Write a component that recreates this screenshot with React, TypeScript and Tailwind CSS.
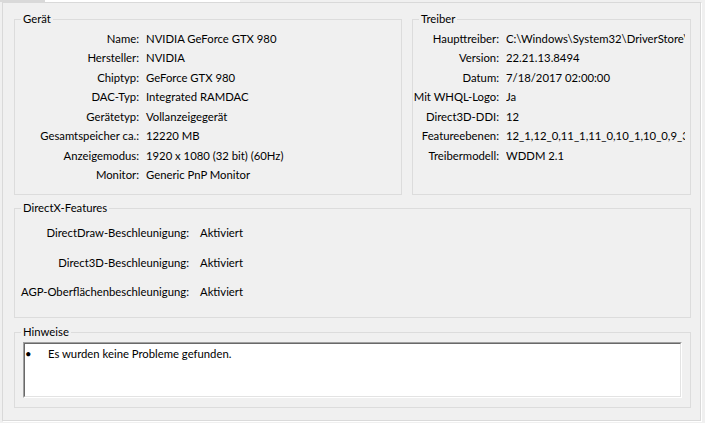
import type { ReactNode } from 'react';

const DEVICE_ROWS = [
  ['Name', 'NVIDIA GeForce GTX 980'],
  ['Hersteller', 'NVIDIA'],
  ['Chiptyp', 'GeForce GTX 980'],
  ['DAC-Typ', 'Integrated RAMDAC'],
  ['Gerätetyp', 'Vollanzeigegerät'],
  ['Gesamtspeicher ca.', '12220 MB'],
  ['Anzeigemodus', '1920 x 1080 (32 bit) (60Hz)'],
  ['Monitor', 'Generic PnP Monitor'],
];

const DRIVER_ROWS = [
  ['Haupttreiber', 'C:\\Windows\\System32\\DriverStore\\FileRepository\\nv_dispi.inf_amd64\\nvldumdx.dll'],
  ['Version', '22.21.13.8494'],
  ['Datum', '7/18/2017 02:00:00'],
  ['Mit WHQL-Logo', 'Ja'],
  ['Direct3D-DDI', '12'],
  ['Featureebenen', '12_1,12_0,11_1,11_0,10_1,10_0,9_3,9_2,9_1'],
  ['Treibermodell', 'WDDM 2.1'],
];

const FEATURES = [
  ['DirectDraw-Beschleunigung', 'Aktiviert'],
  ['Direct3D-Beschleunigung', 'Aktiviert'],
  ['AGP-Oberflächenbeschleunigung', 'Aktiviert'],
];

function GroupBox({ title, className, children }: { title: string; className: string; children?: ReactNode }) {
  return (
    <fieldset className={`min-w-0 shrink-0 border border-[#dcdcdc] ${className}`}>
      <legend className="ml-[6px] px-[2px] leading-[14px]">{title}</legend>
      {children}
    </fieldset>
  );
}

export default function App() {
  return (
    <div className="w-[705px] h-[423px] bg-[#f0f0f0] text-[11.3px] text-black font-['Lato',sans-serif] overflow-hidden">
      {/* tab strip edge */}
      <div className="flex h-[2px]">
        <div className="w-[45px] bg-[#d9d9d9]" />
        <div className="w-[195px] bg-white" />
      </div>

      {/* tab page */}
      <div className="ml-[2px] w-[700px] h-[420px] border border-[#d9d9d9] border-r-white border-b-white">
        <div className="w-[698px] h-[418px] border-r border-b border-[#dadada] pl-[11px] pt-[9px]">
          <div className="flex gap-[10px]">
            <GroupBox title="Gerät" className="w-[388px] h-[183px]">
              <div className="flex flex-col pt-[2.5px]">
                {DEVICE_ROWS.map(([label, value]) => (
                  <div key={label} className="flex h-[19.5px] leading-[19.5px] whitespace-nowrap">
                    <span className="w-[124px] text-right">{label}:</span>
                    <span className="ml-[7px]">{value}</span>
                  </div>
                ))}
              </div>
            </GroupBox>

            <GroupBox title="Treiber" className="w-[279px] h-[183px] pr-[5px]">
              <div className="flex flex-col pt-[2.5px]">
                {DRIVER_ROWS.map(([label, value]) => (
                  <div key={label} className="flex h-[19.5px] leading-[19.5px] whitespace-nowrap">
                    <span className="w-[86px] shrink-0 text-right">{label}:</span>
                    <span className="ml-[7px] min-w-0 flex-1 overflow-hidden">{value}</span>
                  </div>
                ))}
              </div>
            </GroupBox>
          </div>

          <GroupBox title="DirectX-Features" className="mt-[6px] w-[677px] h-[117px]">
            <div className="flex flex-col gap-[9.5px] pt-[8px]">
              {FEATURES.map(([label, value]) => (
                <div key={label} className="flex h-[20px] leading-[20px] whitespace-nowrap">
                  <span className="w-[174px] text-right">{label}:</span>
                  <span className="ml-[11px]">{value}</span>
                </div>
              ))}
            </div>
          </GroupBox>

          <GroupBox title="Hinweise" className="mt-[7px] w-[677px] h-[83px]">
            <div className="ml-[8px] mt-[3px] w-[659px] h-[56px] border border-[#a0a0a0] border-r-white border-b-white">
              <div className="h-full border border-[#696969] border-r-[#e3e3e3] border-b-[#e3e3e3] bg-white">
                <div className="flex pt-[2px] leading-[16px]">
                  <span className="w-[23px]">•</span>
                  <span>Es wurden keine Probleme gefunden.</span>
                </div>
              </div>
            </div>
          </GroupBox>
        </div>
      </div>
    </div>
  );
}
